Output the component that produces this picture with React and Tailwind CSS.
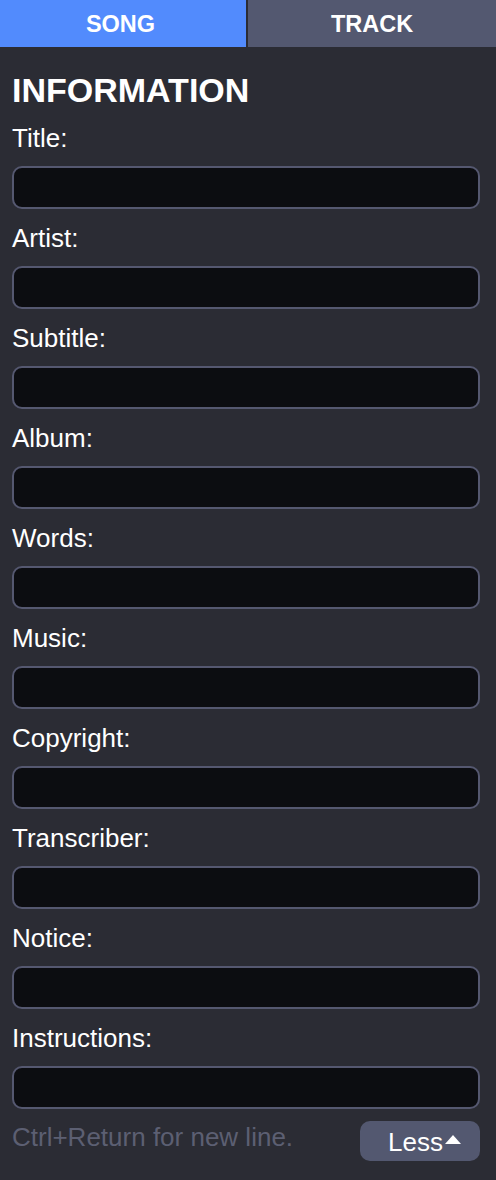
import React from "react";

const fields = [
  "Title",
  "Artist",
  "Subtitle",
  "Album",
  "Words",
  "Music",
  "Copyright",
  "Transcriber",
  "Notice",
  "Instructions",
];

export default function App() {
  return (
    <div
      className="w-[496px] h-[1180px] bg-[#2b2c34] text-white overflow-hidden"
      style={{ fontFamily: '"Liberation Sans", Arial, sans-serif' }}
    >
      {/* Tabs */}
      <div className="flex h-[47px] gap-[2px]">
        <button className="w-[246px] bg-[#528bfd] pt-[3px] pr-[5px] text-[23.5px] font-bold text-white flex items-center justify-center">
          SONG
        </button>
        <button className="flex-1 bg-[#535870] pt-[3px] text-[23.5px] font-bold text-white flex items-center justify-center">
          TRACK
        </button>
      </div>

      <div className="pl-3 pr-4 pt-[23px]">
        <h2 className="text-[34px] leading-[40px] font-bold mb-[11px]">INFORMATION</h2>

        {fields.map((name) => (
          <div key={name} className="mb-[12px]">
            <label className="block text-[26px] leading-[34px] mb-[11px]">{name}:</label>
            <input
              type="text"
              className="block w-full h-[43px] rounded-[10px] border-2 border-[#555870] bg-[#0c0d11] px-3 text-[24px] text-white outline-none"
            />
          </div>
        ))}

        {/* Footer */}
        <div className="flex items-start justify-between mt-[2px]">
          <span className="pt-[1px] text-[26px] leading-[30px] text-[#5c5f72]">Ctrl+Return for new line.</span>
          <button className="flex items-center h-[40px] w-[120px] rounded-[10px] bg-[#535870] pl-[28px] pt-[2px] text-[26px] text-white">
            Less
            <svg className="ml-[2px] mb-[6px]" width="16" height="9" viewBox="0 0 16 9">
              <path d="M8 0L16 9H0Z" fill="currentColor" />
            </svg>
          </button>
        </div>
      </div>
    </div>
  );
}
